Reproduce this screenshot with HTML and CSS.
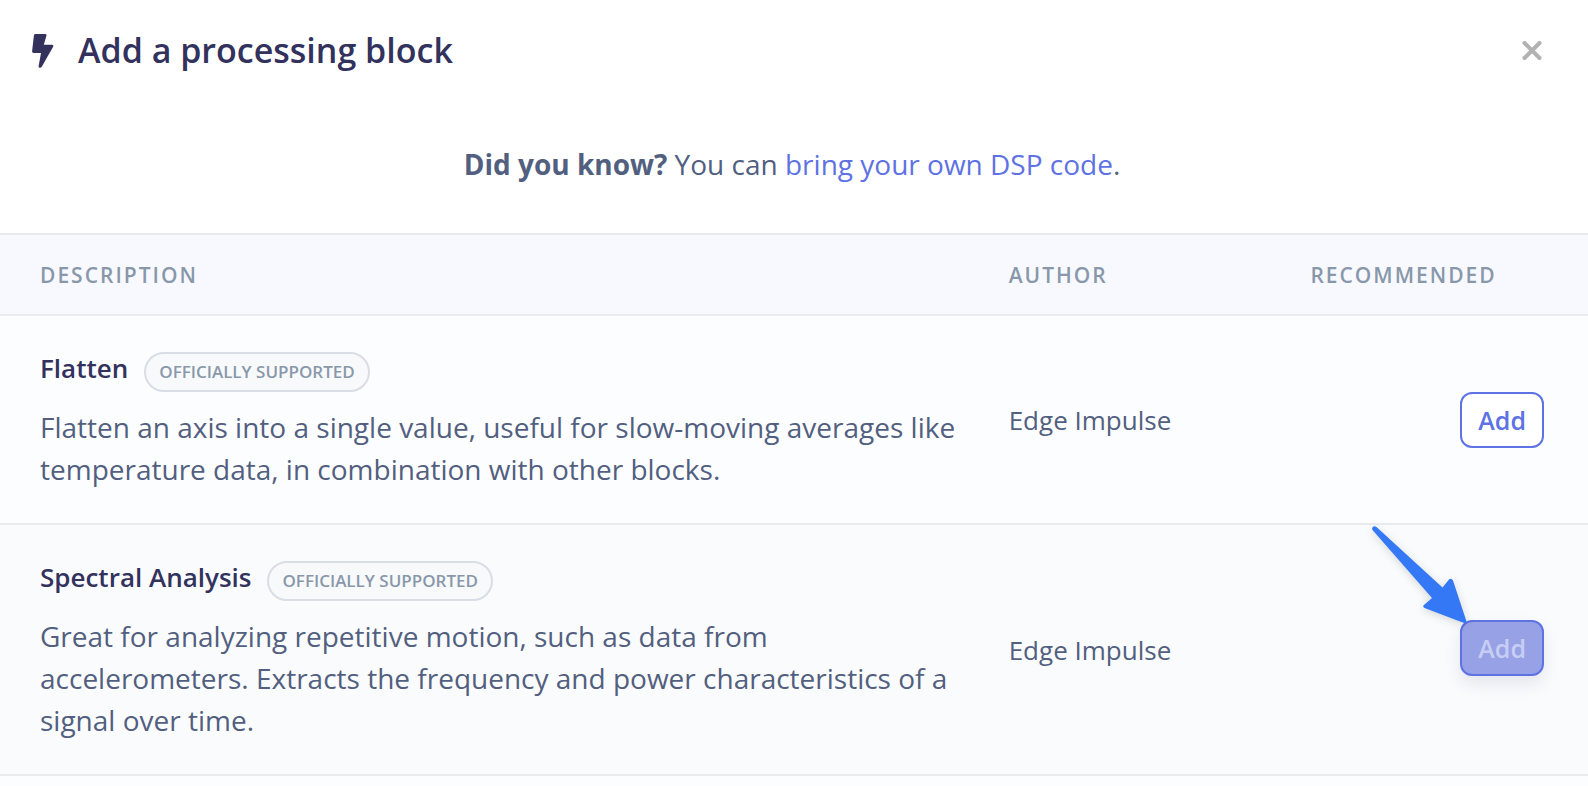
FILE: index.html
```
<!DOCTYPE html>
<html lang="en">
<head>
    <meta charset="UTF-8">
    <meta name="viewport" content="width=device-width, initial-scale=1.0">
    <title>Add a processing block</title>
    <link rel="stylesheet" href="styles.css">
</head>
<body>
    <header class="modal-header">
        <h1 class="modal-title">
            <svg class="bolt" viewBox="0 0 22 34" width="22" height="34" aria-hidden="true">
                <path d="M3.500 0H13.300Q15 0 14.500 1.600L11.800 10.800H20Q22 11 21 12.900L9.600 33Q8.900 34 7.600 33.800Q6.400 33.400 6.600 32.200L9 19H1.600Q0 19 0.100 17.300L1.900 1.400Q2.100 0 3.500 0Z"/>
            </svg>
            Add a processing block
        </h1>
        <button class="close" type="button" aria-label="Close">
            <svg viewBox="0 0 20 20" width="20" height="20" aria-hidden="true">
                <path d="M2.500 2L17.500 17M17.500 2L2.500 17"/>
            </svg>
        </button>
    </header>

    <p class="tip"><strong>Did you know?</strong> You can <a href="#">bring your own DSP code</a>.</p>

    <main class="blocks">
        <table class="blocks-table">
            <thead>
                <tr>
                    <th class="col-description">Description</th>
                    <th class="col-author">Author</th>
                    <th>Recommended</th>
                </tr>
            </thead>
            <tbody>
                <tr>
                    <td>
                        <div class="block-name">Flatten <span class="badge">Officially supported</span></div>
                        <p class="block-text">Flatten an axis into a single value, useful for slow-moving averages like temperature data, in combination with other blocks.</p>
                    </td>
                    <td>Edge Impulse</td>
                    <td class="actions"><button class="btn" type="button">Add</button></td>
                </tr>
                <tr class="current">
                    <td>
                        <div class="block-name">Spectral Analysis <span class="badge">Officially supported</span></div>
                        <p class="block-text">Great for analyzing repetitive motion, such as data from accelerometers. Extracts the frequency and power characteristics of a signal over time.</p>
                    </td>
                    <td>Edge Impulse</td>
                    <td class="actions">
                        <button class="btn btn-active" type="button">Add
                            <svg class="pointer" viewBox="0 0 96 98" width="96" height="98" aria-hidden="true">
                                <path d="M0.500 1.500Q2 -0.500 4.500 1L70.500 61.500L77 53.500Q79.500 51.500 81 54.500L94.500 95.500Q94.500 97.500 92 97L52.500 82Q50 80 52.500 78.500L60 72L0.500 4Q-0.200 2.500 0.500 1.500Z"/>
                            </svg>
                        </button>
                    </td>
                </tr>
            </tbody>
        </table>
    </main>
</body>
</html>
```
FILE: styles.css
```
* {
    box-sizing: border-box;
}

body {
    margin: 0;
    min-height: 100vh;
    display: flex;
    flex-direction: column;
    background: #fff;
    color: #525f7f;
    font-family: "Open Sans", sans-serif;
    font-size: 28px;
    line-height: 42px;
}

/* Header */
.modal-header {
    display: flex;
    align-items: center;
    justify-content: space-between;
    padding: 25px 40px 24px 32px;
}

.modal-title {
    display: flex;
    align-items: center;
    gap: 24px;
    margin: 0;
    color: #32325d;
    font-size: 34px;
    font-weight: 600;
    line-height: 51px;
}

.bolt {
    fill: #32325d;
}

.close {
    display: flex;
    padding: 6px;
    border: 0;
    background: none;
    cursor: pointer;
}

.close path {
    fill: none;
    stroke: #b2b2b2;
    stroke-width: 4;
    stroke-linecap: round;
}

.tip {
    margin: 0;
    padding: 43px 44px 48px 40px;
    text-align: center;
}

.tip a {
    color: #5e72e4;
    text-decoration: none;
}

/* Table */
.blocks {
    flex: 1;
    background: #fcfdff;
}

.blocks-table {
    width: 100%;
    border-collapse: separate;
    border-spacing: 0;
    border-bottom: 2px solid #e9ecef;
}

.blocks-table th {
    padding: 25px 8px 24px 40px;
    border-top: 2px solid #e9ecef;
    background: #f8f9fe;
    color: #8898aa;
    font-size: 21px;
    font-weight: 600;
    line-height: 30px;
    letter-spacing: 2px;
    text-align: left;
    text-transform: uppercase;
}

.col-description {
    width: 61%;
}

.col-author {
    width: 19%;
}

.blocks-table td {
    padding: 33px 8px 33px 40px;
    border-top: 2px solid #e9ecef;
    font-size: 26px;
    vertical-align: middle;
}

.current {
    background: #fafbfd;
}

.block-name {
    display: flex;
    align-items: baseline;
    gap: 16px;
    margin-bottom: 14px;
    color: #32325d;
    font-weight: 600;
    line-height: 39px;
}

.badge {
    padding: 0 13px;
    border: 2px solid #d8dee4;
    border-radius: 20px;
    background: #f8f9fb;
    color: #8898aa;
    font-size: 17px;
    line-height: 36px;
    text-transform: uppercase;
}

.block-text {
    margin: 0;
    font-size: 28px;
}

.blocks-table .actions {
    padding-right: 44px;
    text-align: right;
}

.btn {
    position: relative;
    padding: 8px 16px;
    border: 2px solid #5e72e4;
    border-radius: 12px;
    background: #fff;
    color: #5e72e4;
    font-family: inherit;
    font-size: 25px;
    font-weight: 600;
    line-height: 36px;
    vertical-align: middle;
    cursor: pointer;
}

.btn-active {
    background: #97a1e6;
    color: #c8cef3;
    box-shadow: 0 8px 16px rgba(50, 50, 93, 0.1);
    transform: translateY(-2px);
}

/* Arrow that points at the button */
.pointer {
    position: absolute;
    right: 74px;
    bottom: 50px;
    overflow: visible;
    fill: #3478f6;
    filter: drop-shadow(0 2px 4px rgba(0, 0, 0, 0.15));
}
```
